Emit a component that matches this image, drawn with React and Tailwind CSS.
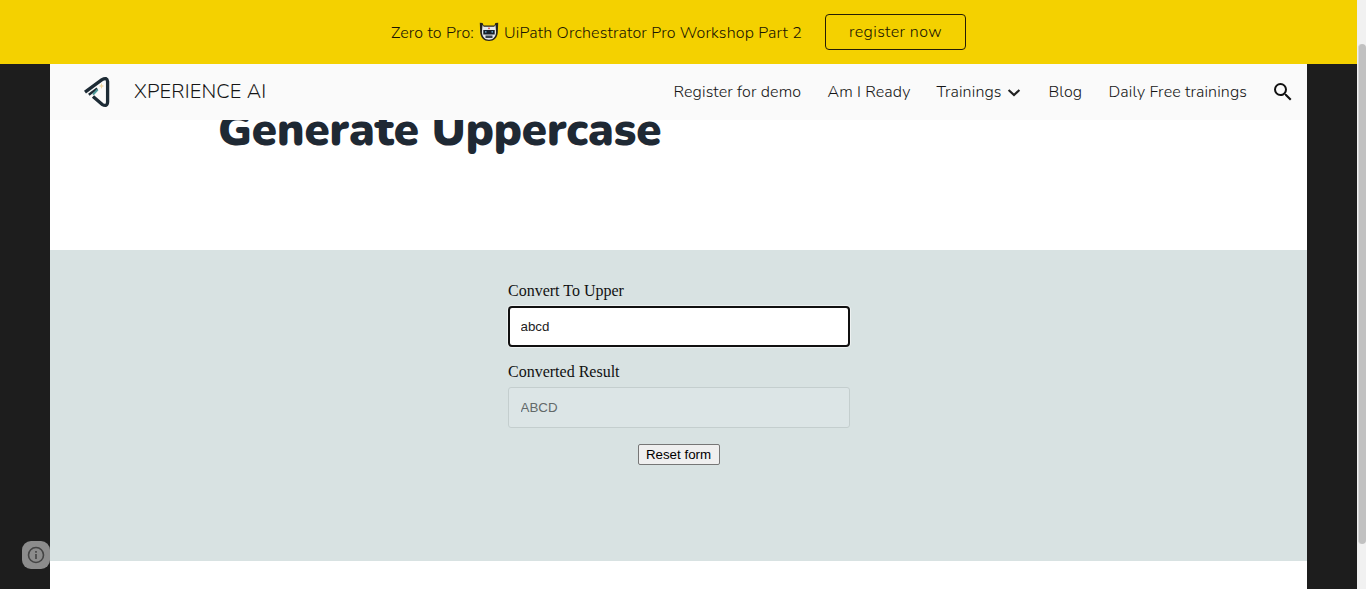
import React from "react";

function Robot() {
  return (
    <svg width="20" height="20" viewBox="0 0 20 20" className="mx-[5px] shrink-0">
      <path d="M.8.8 3.600 1 4.600 3.400h10.800L16.400 1l2.800-.2-.4 9.700C18.400 15.500 15 19 10 19S1.600 15.500 1.200 10.500Z" fill="#26231c" />
      <path d="M3.500 3 4.800 4.800h10.400L16.500 3l.6 7.200c-.4 4.800-3.200 7.500-7.100 7.500s-6.700-2.700-7.100-7.500Z" fill="#e6e8ec" />
      <path d="M4.300 8h11.400v4.500H4.300Z" fill="#18212c" />
      <path d="M6 9.300h1.500v1.200H6zM12.500 9.300H14v1.200h-1.500z" fill="#75b9e5" />
      <path d="M6.500 13.500h7v2.500h-7Z" fill="#39434d" />
      <circle cx="10" cy="6.300" r=".9" fill="#d34b3d" />
    </svg>
  );
}

function Logo() {
  return (
    <svg width="28" height="32" viewBox="0 0 28 32" fill="none" className="shrink-0">
      <path d="M1 16.200 18 3.700Q23 .7 23.600 5.500v20.500Q23.300 31.500 18 28.300L9 20.500" stroke="#1d2b35" strokeWidth="3.300" strokeLinejoin="round" />
      <path d="m4.800 18.800 8.500-6.300" stroke="#1d2b35" strokeWidth="2.400" />
      <path d="m9 18.600 4.700-5.100" stroke="#4e9b9b" strokeWidth="2" />
      <path d="m17.500 7 .8 2.200 2 .8-2 .8-.8 2.200-.8-2.200-2-.8 2-.8Z" fill="#efd6a0" />
    </svg>
  );
}

function NavItem({ className, children }) {
  return <a className={"flex shrink-0 items-center whitespace-nowrap " + className}>{children}</a>;
}

export default function App() {
  return (
    <div className="flex h-[589px] w-full overflow-hidden bg-[#1d1d1d] font-['Nunito','Open_Sans',sans-serif]">
      <div className="flex min-w-0 flex-1 flex-col">
        <div className="flex h-16 shrink-0 items-center bg-[#f4d100] pl-[391px] text-[16px] font-light text-[#1a1503]">
          <div className="flex w-[434px] shrink-0 items-center whitespace-nowrap pt-px">
            <span className="w-[83px] tracking-[0.15px]">Zero to Pro:</span>
            <span className="flex w-[30px] pb-px"><Robot /></span>
            <span className="tracking-[0.16px]">UiPath Orchestrator Pro Workshop Part 2</span>
          </div>
          <button className="h-9 w-[141px] shrink-0 rounded-[4px] border border-[#251d05] tracking-[0.38px]">register now</button>
        </div>
        <div className="flex min-h-0 flex-1 flex-col px-[50px]">
          <header className="flex h-14 shrink-0 items-center bg-[#fafafa] pl-[34px] text-[#151515]">
            <Logo />
            <span className="ml-[22px] w-[539px] shrink-0 text-[20px] font-light tracking-[0.16px]">XPERIENCE AI</span>
            <nav className="flex items-center text-[16px] font-light tracking-[0.13px]">
              <NavItem className="w-[154px] pl-[0.5px]">Register for demo</NavItem>
              <NavItem className="w-[109px] pl-[0.5px]">Am I Ready</NavItem>
              <NavItem className="w-[112px] pl-[0.5px]">
                <span className="w-[69px]">Trainings</span>
                <svg width="16" height="16" viewBox="0 0 16 16" fill="none" stroke="#212121" strokeWidth="2.200"><path d="m2.600 6 5.400 5 5.400-5" /></svg>
              </NavItem>
              <NavItem className="w-[60px] pl-[0.5px]">Blog</NavItem>
              <NavItem className="w-[163px] pl-[0.5px]">Daily Free trainings</NavItem>
            </nav>
            <svg width="24" height="24" viewBox="0 0 24 24" className="shrink-0" fill="#111"><path d="M15.500 14h-.79l-.28-.27A6.471 6.471 0 0 0 16 9.500 6.500 6.500 0 1 0 9.500 16c1.610 0 3.090-.59 4.230-1.570l.27.28v.79l5 4.990L20.490 19l-4.990-5zm-6 0C7.010 14 5 11.990 5 9.500S7.010 5 9.500 5 14 7.010 14 9.500 11.990 14 9.500 14z" /></svg>
          </header>
          <section className="h-[130px] shrink-0 overflow-hidden bg-white pl-[168px]">
            <h1 className="-mt-5 whitespace-nowrap text-[45.333px] font-black leading-[60px] tracking-[-0.03px] text-[#1f2934]">Generate Uppercase</h1>
          </section>
          <section className="flex h-[311px] shrink-0 flex-col items-center bg-[#d8e2e2] pt-[31px]">
            <form className="flex w-[342px] flex-col font-['Liberation_Serif',serif] text-[16px] text-[#111]">
              <label className="h-[25px] pl-[0.5px] leading-[20px]">Convert To Upper</label>
              <input readOnly value="abcd" className="h-[41px] rounded-[4px] border-2 border-[#101010] bg-white pl-[11px] font-['Liberation_Sans',sans-serif] text-[13.333px] text-[#222] shadow-[0_0_0_1px_#edf1f1] outline-none" />
              <label className="mt-[15px] h-[25px] pl-[0.5px] leading-[20px]">Converted Result</label>
              <input disabled value="ABCD" className="h-[41px] rounded-[3px] border border-[#c4cece] bg-[#dce5e6] pl-3 font-['Liberation_Sans',sans-serif] text-[13.333px] text-[#626969]" />
              <button type="button" className="mt-4 h-[21px] w-[82px] self-center whitespace-nowrap rounded-[2px] border border-[#767676] bg-[#efefef] font-['Liberation_Sans',sans-serif] text-[13.333px] leading-[19px] text-black">Reset form</button>
            </form>
          </section>
          <div className="flex-1 bg-white" />
        </div>
      </div>
      <div className="w-[9px] shrink-0 bg-[#f1f1f1] pt-11">
        <div className="ml-[1px] h-[500px] w-2 rounded-t-[4px] rounded-b-[4px] border-l border-[#d8d8d8] bg-[#c1c1c1]" />
      </div>
      <button aria-label="Site information" className="fixed bottom-5 left-[22px] flex h-7 w-7 items-center justify-center rounded-[9px] bg-[#8c8c8c]">
        <svg width="18" height="18" viewBox="0 0 18 18" fill="none" stroke="#444" strokeWidth="1.600"><circle cx="9" cy="9" r="7.500" /><path d="M9 8v5M9 5v1.700" /></svg>
      </button>
    </div>
  );
}
